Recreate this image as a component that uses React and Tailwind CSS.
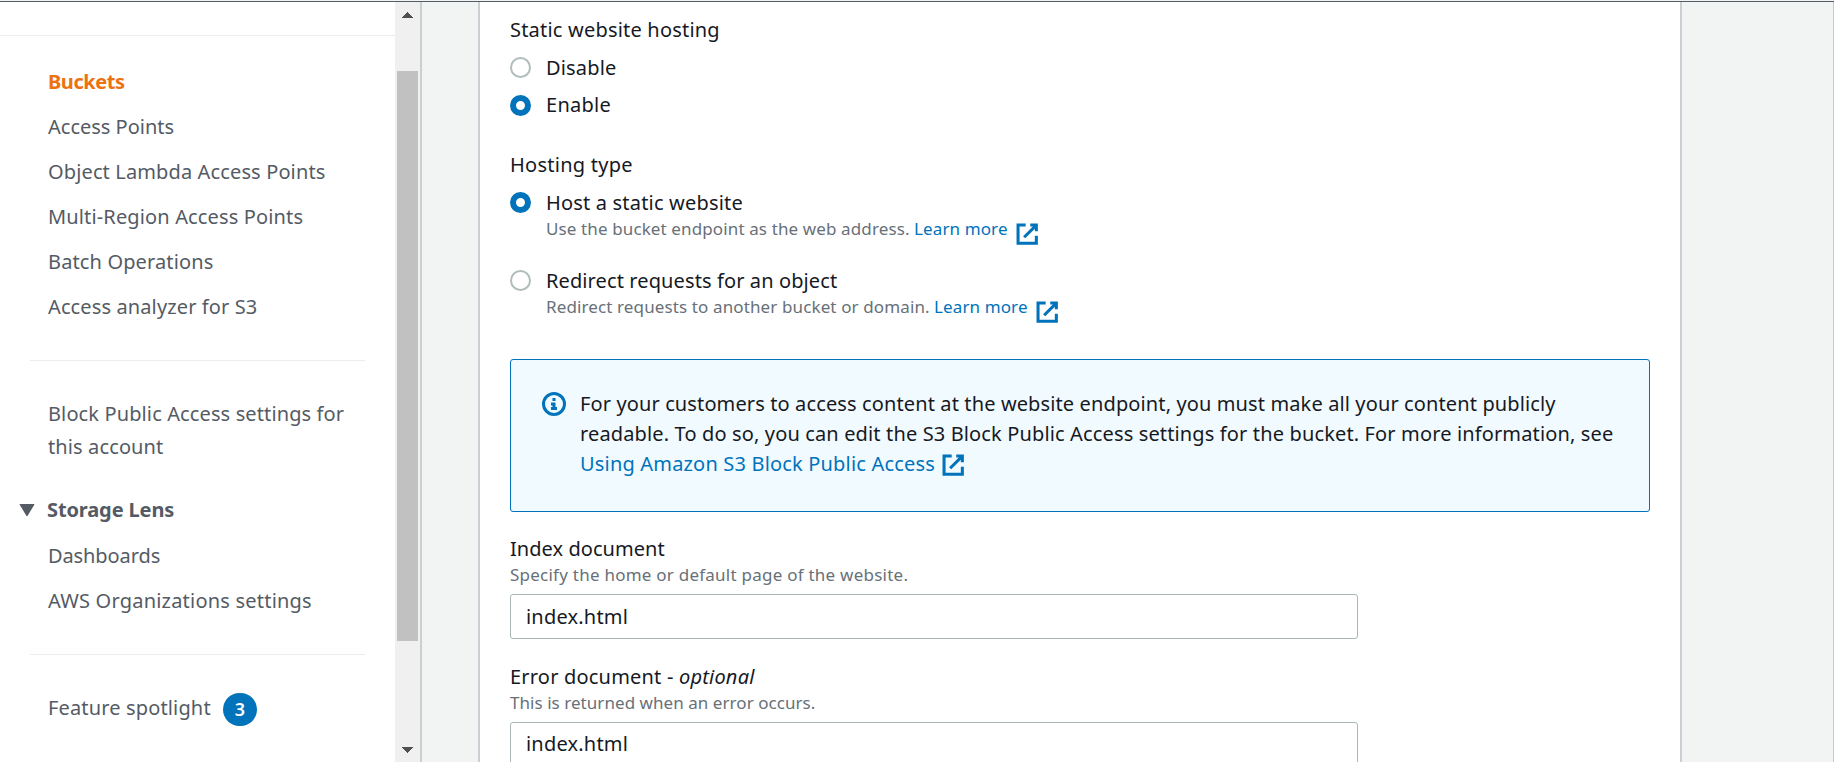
function ExternalIcon({ className = '' }) {
  return (
    <svg
      viewBox="0 0 16 16"
      className={`size-[24.4px] shrink-0 fill-none stroke-[#0073bb] stroke-2 ${className}`}
    >
      <path d="M10 2h4v4" />
      <path d="M6 10l8-8" />
      <path d="M14 9.048V14H2V2h5" />
    </svg>
  );
}

function InfoIcon() {
  return (
    <svg viewBox="0 0 16 16" className="mt-1 size-6 shrink-0 fill-none stroke-[#0073bb] stroke-2">
      <circle cx="8" cy="8" r="7" />
      <path d="M8 11V8H6" />
      <path d="M10 11H6" />
      <path d="M7.99 5H8v.01h-.01z" />
    </svg>
  );
}

function Radio({ checked }) {
  return checked ? (
    <span className="size-[21px] shrink-0 rounded-full border-[6.5px] border-[#0073bb] bg-white" />
  ) : (
    <span className="size-[21px] shrink-0 rounded-full border-2 border-[#b1bcbd] bg-white" />
  );
}

function NavItem({ children, className = '' }) {
  return <a className={`block h-[45px] leading-[45px] ${className}`}>{children}</a>;
}

function Sidebar() {
  return (
    <nav className="flex h-full w-[395px] flex-col overflow-hidden whitespace-nowrap bg-white text-[20px] text-[#545b64]">
      <div className="h-[34px] shrink-0 border-b border-[#eaeded]" />
      <div className="mt-[23px] pl-12">
        <NavItem className="font-bold tracking-[-0.45px] text-[#ec7211]">Buckets</NavItem>
        <NavItem>Access Points</NavItem>
        <NavItem className="tracking-[0.13px]">Object Lambda Access Points</NavItem>
        <NavItem className="tracking-[0.14px]">Multi-Region Access Points</NavItem>
        <NavItem className="tracking-[0.13px]">Batch Operations</NavItem>
        <NavItem className="tracking-[0.12px]">Access analyzer for S3</NavItem>
      </div>
      <hr className="ml-[30px] mt-[31px] w-[335px] border-[#eaeded]" />
      <a className="mt-9 block pl-12 leading-[33px] tracking-[0.12px]">
        Block Public Access settings for
        <br />
        this account
      </a>
      <div className="mt-[30px] flex h-[33px] items-center pl-[19px] font-bold leading-[33px] tracking-[-0.12px]">
        <svg viewBox="0 0 16 12" className="mr-3 mt-[1px] h-3 w-4 fill-[#545b64]">
          <path d="M1.2 0h13.6q.9 0 .4.9L8.8 11.4q-.8 1.2-1.6 0L.8.9Q.3 0 1.2 0z" />
        </svg>
        Storage Lens
      </div>
      <div className="mt-[7px] pl-12">
        <NavItem className="tracking-[-0.1px]">Dashboards</NavItem>
        <NavItem className="tracking-[0.21px]">AWS Organizations settings</NavItem>
      </div>
      <hr className="ml-[30px] mt-[31px] w-[335px] border-[#eaeded]" />
      <div className="mt-9 flex pl-12 leading-[33px]">
        <span className="w-[175px] tracking-[0.15px]">Feature spotlight</span>
        <span className="mt-[2px] h-[33px] w-[34px] rounded-full bg-[#0073bb] text-center text-[18px] font-semibold leading-[32px] text-white">
          3
        </span>
      </div>
    </nav>
  );
}

function Scrollbar() {
  return (
    <div className="flex h-full w-[25px] flex-col items-center bg-[#f0f0f0]">
      <svg viewBox="0 0 11 6" className="mt-[10px] h-[6px] w-[11px] shrink-0 fill-[#505050]" shapeRendering="crispEdges">
        <path d="M5.5 0L11 6H0z" />
      </svg>
      <div className="mt-[53px] h-[570px] w-[21px] shrink-0 bg-[#c1c1c1]" />
      <svg viewBox="0 0 11 6" className="mt-[106px] h-[6px] w-[11px] shrink-0 fill-[#505050]" shapeRendering="crispEdges">
        <path d="M0 0h11L5.5 6z" />
      </svg>
    </div>
  );
}

function Option({ checked, label, tracking, children, className = '', radioClassName = 'mt-1' }) {
  return (
    <div className={`flex ${className}`}>
      <span className={`flex w-9 shrink-0 ${radioClassName}`}>
        <Radio checked={checked} />
      </span>
      <div>
        <div className={`h-[30px] leading-[30px] ${tracking}`}>{label}</div>
        {children}
      </div>
    </div>
  );
}

function Hint({ children, tracking }) {
  return (
    <div className={`-mt-px flex h-6 text-[17px] leading-6 text-[#687078] ${tracking}`}>{children}</div>
  );
}

function Panel() {
  return (
    <section className="flex h-full w-[1204px] flex-col overflow-hidden whitespace-nowrap border-x-2 border-[#c9cfd2] bg-white pl-[30px] text-[20px] text-[#16191f]">
      <div className="mt-[13px] h-[30px] shrink-0 leading-[30px] tracking-[0.2px]">Static website hosting</div>
      <Option label="Disable" tracking="tracking-[0.17px]" className="mt-2" />
      <Option
        checked
        label="Enable"
        tracking="tracking-[0.26px]"
        className="mt-[7px]"
        radioClassName="mt-[5px]"
      />
      <div className="mt-[30px] h-[30px] shrink-0 leading-[30px] tracking-[0.26px]">Hosting type</div>
      <Option checked label="Host a static website" tracking="tracking-[0.18px]" className="mt-2">
        <Hint tracking="tracking-[0.12px]">
          <span className="w-[368px]">Use the bucket endpoint as the web address.</span>
          <a className="w-[101px] text-[#0073bb]">Learn more</a>
          <ExternalIcon className="mt-[5px]" />
        </Hint>
      </Option>
      <Option label="Redirect requests for an object" tracking="tracking-[0.11px]" className="mt-[25px]">
        <Hint tracking="tracking-[0.12px]">
          <span className="w-[388px]">Redirect requests to another bucket or domain.</span>
          <a className="w-[101px] text-[#0073bb]">Learn more</a>
          <ExternalIcon className="mt-[5px]" />
        </Hint>
      </Option>
      <div className="mt-10 flex h-[153px] w-[1140px] shrink-0 rounded-[3px] border border-[#0073bb] bg-[#f1faff] pl-[31px] pt-[28px]">
        <InfoIcon />
        <div className="ml-[14px] mt-px leading-[30px]">
          <div className="tracking-[0.121px]">
            For your customers to access content at the website endpoint, you must make all your content publicly
          </div>
          <div className="tracking-[0.139px]">
            readable. To do so, you can edit the S3 Block Public Access settings for the bucket. For more information, see
          </div>
          <a className="flex tracking-[0.18px] text-[#0073bb]">
            <span className="w-[361px]">Using Amazon S3 Block Public Access</span>
            <ExternalIcon className="mt-1" />
          </a>
        </div>
      </div>
      <label className="mt-[22px] h-[30px] shrink-0 leading-[30px] tracking-[0.05px]">Index document</label>
      <Hint tracking="tracking-[0.24px]">Specify the home or default page of the website.</Hint>
      <input
        readOnly
        value="index.html"
        className="mt-[7px] h-[45px] w-[848px] shrink-0 rounded-[3px] border border-[#aab7b8] px-[15px] tracking-[0.2px] outline-none"
      />
      <label className="mt-[23px] h-[30px] shrink-0 leading-[30px] tracking-[0.2px]">
        Error document - <i>optional</i>
      </label>
      <Hint tracking="tracking-[0.05px]">This is returned when an error occurs.</Hint>
      <input
        readOnly
        value="index.html"
        className="mt-[7px] h-[45px] w-[848px] shrink-0 rounded-[3px] border border-[#aab7b8] px-[15px] pb-[2px] tracking-[0.2px] outline-none"
      />
    </section>
  );
}

export default function App() {
  return (
    <div className="flex h-[762px] w-[1834px] flex-col overflow-hidden bg-[#f2f3f3] font-['Noto_Sans',sans-serif]">
      <div className="h-[2px] shrink-0 border-b border-[#545b64]" />
      <div className="flex h-[760px]">
        <Sidebar />
        <Scrollbar />
        <main className="flex flex-1 justify-center border-l-2 border-r border-l-[#c9cfd2] border-r-[#c3cacd] pr-[95px]">
          <Panel />
        </main>
      </div>
    </div>
  );
}
